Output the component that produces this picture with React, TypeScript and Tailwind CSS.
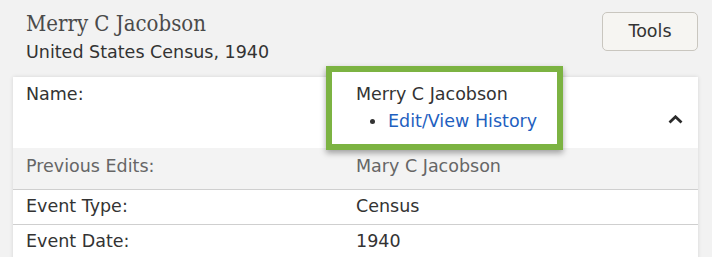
import React from 'react';

const rows = [
  { label: 'Event Type:', value: 'Census', h: 'h-[35px]' },
  { label: 'Event Date:', value: '1940', h: 'h-[35px]' },
];

const App: React.FC = () => {
  return (
    <div className="w-[712px] h-[257px] overflow-hidden bg-[#f2f2f2] text-[#333] font-['DejaVu_Sans',_Verdana,_sans-serif]">
      <header className="flex items-start justify-between pl-[26px] pr-[14px] pt-[10px]">
        <div>
          <h1 className="text-[22px] leading-[28px] text-[#4a4a4a] [font-stretch:condensed] font-['DejaVu_Serif',_Georgia,_serif]">Merry C Jacobson</h1>
          <p className="mt-[2px] text-[17.5px] leading-[24px] text-[#333]">United States Census, 1940</p>
        </div>
        <button className="mt-[2px] w-[96px] h-[39px] rounded-[5px] border border-[#c9c6bf] bg-[#f6f5f2] text-[17.5px] text-[#333]">
          Tools
        </button>
      </header>

      <div className="ml-[13px] mt-[13px] w-[685px] bg-white shadow-[0_0_4px_rgba(0,0,0,0.12)] text-[17.5px] leading-[27px]">
        <div className="grid grid-cols-[330px_1fr_auto] h-[71px] pl-[13px] pr-[15px] pt-[4px]">
          <div>Name:</div>
          <div className="relative">
            <div className="absolute -left-[30px] -top-[15px] w-[237px] h-[84px] bg-white border-[6px] border-[#7cb342] shadow-[0_3px_6px_rgba(0,0,0,0.35)]" />
            <div className="relative">
              <div>Merry C Jacobson</div>
              <div className="flex items-center pl-[14px]">
                <span className="w-[5px] h-[5px] rounded-full bg-[#333]" />
                <a className="ml-[13px] text-[#1f5fbf]">Edit/View History</a>
              </div>
            </div>
          </div>
          <svg width="15" height="9" viewBox="0 0 15 9" className="mt-[34px]">
            <polyline points="1.5,7.5 7.5,1.8 13.5,7.5" fill="none" stroke="#2b2b2b" strokeWidth="2.8" />
          </svg>
        </div>
        <div className="grid grid-cols-[330px_1fr] h-[42px] pl-[13px] pt-[5px] bg-[#f3f3f3] text-[#666] border-b border-[#cfcfcf]">
          <div>Previous Edits:</div>
          <div>Mary C Jacobson</div>
        </div>
        {rows.map((r, i) => (
          <div
            key={r.label}
            className={`grid grid-cols-[330px_1fr] ${r.h} pl-[13px] pt-[3px] ${i === 0 ? 'border-b border-[#cfcfcf]' : ''}`}
          >
            <div>{r.label}</div>
            <div>{r.value}</div>
          </div>
        ))}
      </div>
    </div>
  );
};

export default App;
